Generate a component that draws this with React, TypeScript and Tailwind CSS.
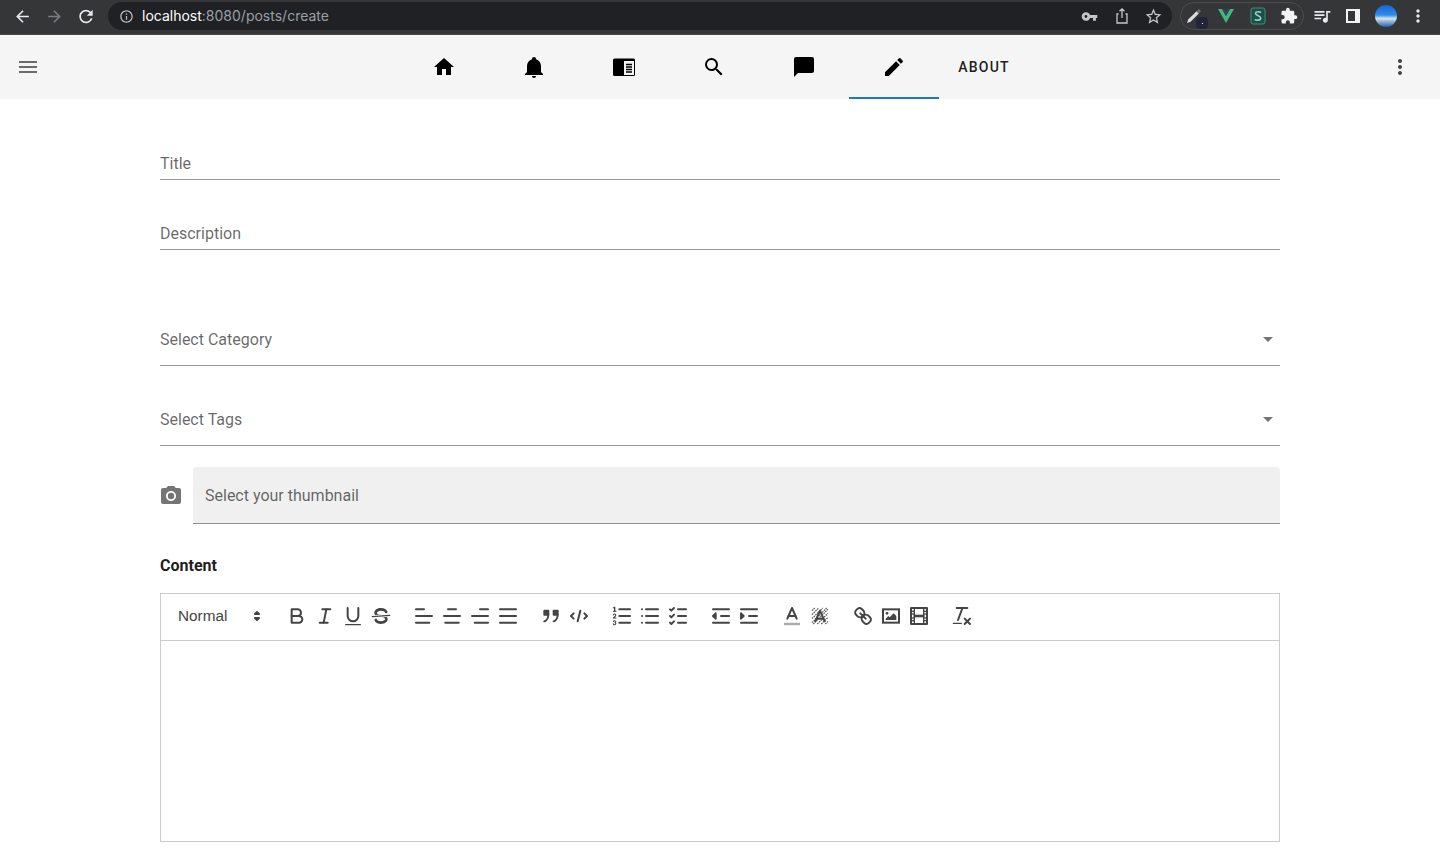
import type { ReactNode } from 'react';
import {
  MdArrowBack,
  MdArrowForward,
  MdRefresh,
  MdInfoOutline,
  MdVpnKey,
  MdStarBorder,
  MdExtension,
  MdQueueMusic,
  MdMoreVert,
  MdHome,
  MdSearch,
  MdChatBubble,
  MdEdit,
  MdPhotoCamera,
  MdArrowDropDown,
} from 'react-icons/md';

const roboto = { fontFamily: 'Roboto, sans-serif' };

function BellIcon() {
  return (
    <svg width="24" height="24" viewBox="0 0 24 24" fill="currentColor">
      <path d="M21,19V20H3V19L5,17V11C5,7.9 7.03,5.17 10,4.29C10,4.19 10,4.1 10,4A2,2 0 0,1 12,2A2,2 0 0,1 14,4C14,4.1 14,4.19 14,4.29C16.97,5.17 19,7.9 19,11V17L21,19M14,21A2,2 0 0,1 12,23A2,2 0 0,1 10,21" />
    </svg>
  );
}

function ReaderIcon() {
  return (
    <svg width="24" height="24" viewBox="0 0 24 24">
      <rect x="1" y="3.5" width="22" height="17.5" rx="1.5" fill="currentColor" />
      <rect x="12" y="6" width="10" height="14" fill="#f5f5f5" />
      <path d="M14 9.5h6M14 12h6M14 14.5h6M14 17h6" stroke="currentColor" strokeWidth="1.3" />
    </svg>
  );
}

const TABS = [
  { key: 'home', icon: <MdHome size={24} /> },
  { key: 'bell', icon: <BellIcon /> },
  { key: 'reader', icon: <ReaderIcon /> },
  { key: 'search', icon: <MdSearch size={24} /> },
  { key: 'chat', icon: <MdChatBubble size={24} /> },
  { key: 'edit', icon: <MdEdit size={24} />, active: true },
];

function BrowserBar() {
  return (
    <div className="flex h-[35px] items-center border-b border-[#4a4a4a] bg-[#353638] pb-0.5 text-[#f1f3f4]">
      <div className="flex w-[108px] items-center text-[#e8eaed]">
        <span className="ml-[12px] flex w-5 justify-center"><MdArrowBack size={19} /></span>
        <span className="ml-[12px] flex w-5 justify-center text-[#7b7d80]"><MdArrowForward size={19} /></span>
        <span className="ml-[12px] flex w-5 justify-center"><MdRefresh size={21} /></span>
      </div>
      <div className="flex h-[28px] w-[1064px] items-center rounded-full bg-[#202124]">
        <MdInfoOutline size={15} className="ml-[11px] text-[#bdc1c6]" />
        <span className="ml-[8px] text-sm leading-none" style={{ fontFamily: 'Inter, sans-serif' }}>
          <span className="text-white">localhost</span>
          <span className="text-[#9aa0a6]">:8080/posts/create</span>
        </span>
        <div className="ml-auto flex items-center pr-[9px] text-[#c4c7ca]">
          <MdVpnKey size={17} />
          <svg width="16" height="18" viewBox="0 0 16 18" fill="none" stroke="currentColor" strokeWidth="1.3" className="ml-[16px]">
            <path d="M4.5 7H3v9h10V7h-1.5M8 11V2M5.5 4.3 8 1.8l2.5 2.5" />
          </svg>
          <MdStarBorder size={19} className="ml-[14px]" />
        </div>
      </div>
      <div className="relative ml-[8px] flex h-[28px] w-[124px] items-center rounded-full border border-[#4c4d4f]">
        <svg width="16" height="16" viewBox="0 0 16 16" className="ml-[5px]">
          <path d="M1 15l1.2-3.6L10.5 3.2l2.3 2.3L4.6 13.8z" fill="#dadce0" />
          <path d="M10.5 3.2 12.7 1l2.3 2.3-2.2 2.2z" fill="#6b6d70" />
        </svg>
        <span className="absolute left-[15px] top-[14px] flex h-3 w-3 items-center justify-center rounded-sm bg-[#22253a]">
          <span className="h-px w-px bg-white" />
        </span>
        <svg width="18" height="16" viewBox="0 0 18 16" className="ml-[15px]">
          <path d="M1 1h4l4 7 4-7h4L9 15z" fill="#41b883" />
          <path d="M5 1h2.5L9 3.6 10.5 1H13L9 8z" fill="#35495e" />
        </svg>
        <svg width="16" height="18" viewBox="0 0 16 18" className="ml-[15px]">
          <rect x="1" y="1" width="14" height="16" rx="2" fill="#1f4d48" stroke="#3f8f80" strokeWidth="1" />
          <path d="M11 5.5C10 4.6 6 4.2 5.5 6.2S10.8 8.8 10.7 11.2 6 13.6 4.8 12.4" fill="none" stroke="#8fd3c4" strokeWidth="1.7" />
        </svg>
        <MdExtension size={18} className="ml-[14px] text-[#f1f3f4]" />
      </div>
      <MdQueueMusic size={20} className="ml-[8px] text-[#e8eaed]" />
      <svg width="16" height="16" viewBox="0 0 16 16" className="ml-[13px]">
        <rect x="1" y="1" width="14" height="14" fill="#f1f3f4" />
        <rect x="3" y="3" width="7" height="10" fill="#353638" />
      </svg>
      <div className="ml-[14px] h-[22px] w-[22px] rounded-full bg-[linear-gradient(180deg,#1266d8_0%,#2f8be8_45%,#d8e4ee_62%,#a8bdd0_72%,#1d63c0_100%)]" />
      <MdMoreVert size={20} className="ml-[11px] text-[#e8eaed]" />
    </div>
  );
}

function NavBar() {
  return (
    <nav className="flex h-[64px] items-center bg-[#f5f5f5] pl-1 pr-4" style={roboto}>
      <button className="flex h-12 w-12 items-center justify-center text-[#6a6a6a]">
        <svg width="24" height="24" viewBox="0 0 24 24" fill="currentColor">
          <path d="M3,6H21V8H3V6M3,11H21V13H3V11M3,16H21V18H3V16Z" />
        </svg>
      </button>
      <div className="flex h-full flex-1 justify-center">
        {TABS.map((tab) => (
          <div
            key={tab.key}
            className={
              tab.active
                ? 'flex w-[90px] items-center justify-center border-b-2 border-[#1976d2] pt-0.5 text-black'
                : 'flex w-[90px] items-center justify-center text-black'
            }
          >
            {tab.icon}
          </div>
        ))}
        <div className="flex w-[90px] items-center justify-center text-sm font-medium tracking-[1.25px] text-black/90">
          ABOUT
        </div>
      </div>
      <button className="flex h-12 w-12 items-center justify-center text-[#424242]">
        <MdMoreVert size={24} />
      </button>
    </nav>
  );
}

function Field({ label, className }: { label: string; className: string }) {
  return (
    <div className={`flex items-center border-b border-black/40 pt-0.5 text-base text-black/60 ${className}`}>
      {label}
    </div>
  );
}

function SelectField({ label, className }: { label: string; className: string }) {
  return (
    <div className={`flex h-[53px] items-center justify-between border-b border-black/40 text-base text-black/60 ${className}`}>
      <span className="pt-0.5">{label}</span>
      <MdArrowDropDown size={24} className="text-[#757575]" />
    </div>
  );
}

// quill snow icons, blown up to 24px in the reference
function Tb({ children }: { children: ReactNode }) {
  return (
    <span className="flex h-6 w-7 items-center justify-center">
      <svg
        width="24"
        height="24"
        viewBox="0 0 18 18"
        fill="none"
        stroke="#444"
        strokeWidth="1.5"
        strokeLinecap="round"
        strokeLinejoin="round"
      >
        {children}
      </svg>
    </span>
  );
}

function Group({ children }: { children: ReactNode }) {
  return <div className="mr-[15px] flex">{children}</div>;
}

function Toolbar() {
  return (
    <div className="flex h-[47px] items-center border-b border-[#ccc] pb-0.5 pl-[9px] pr-2">
      <div className="mr-[15px] flex h-6 w-[98px] items-center justify-between pl-2 pr-0.5 text-[15.3px] text-[#444]" style={{ fontFamily: '"Liberation Sans", Arial, sans-serif' }}>
        Normal
        <svg width="18" height="18" viewBox="0 0 18 18" fill="none" stroke="#444" strokeWidth="2" strokeLinejoin="round">
          <polygon points="7 11 9 13 11 11 7 11" />
          <polygon points="7 7 9 5 11 7 7 7" />
        </svg>
      </div>
      <Group>
        <Tb>
          <path d="M5,4H9.5A2.5,2.5,0,0,1,12,6.5v0A2.5,2.5,0,0,1,9.5,9H5A0,0,0,0,1,5,9V4A0,0,0,0,1,5,4Z" />
          <path d="M5,9h5.5A2.5,2.5,0,0,1,13,11.5v0A2.5,2.5,0,0,1,10.5,14H5a0,0,0,0,1,0,0V9A0,0,0,0,1,5,9Z" />
        </Tb>
        <Tb>
          <line x1="7" x2="13" y1="4" y2="4" />
          <line x1="5" x2="11" y1="14" y2="14" />
          <line x1="8" x2="10" y1="14" y2="4" />
        </Tb>
        <Tb>
          <path d="M5,3V9a4.012,4.012,0,0,0,4,4H9a4.012,4.012,0,0,0,4-4V3" />
          <rect height="1" rx="0.5" ry="0.5" width="12" x="3" y="15" fill="#444" stroke="none" />
        </Tb>
        <Tb>
          <line x1="15.5" x2="2.5" y1="8.5" y2="9.5" strokeWidth="1" />
          <path stroke="none" fill="#444" d="M9.007,8C6.542,7.791,6,7.519,6,6.5,6,5.792,7.283,5,9,5c1.571,0,2.765.679,2.969,1.309a1,1,0,0,0,1.9-.617C13.356,4.106,11.354,3,9,3,6.2,3,4,4.538,4,6.5a3.2,3.2,0,0,0,.5,1.843Z" />
          <path stroke="none" fill="#444" d="M8.984,10C11.457,10.208,12,10.479,12,11.5c0,.708-1.283,1.5-3,1.5-1.571,0-2.765-.679-2.969-1.309a1,1,0,1,0-1.9.617C4.644,13.894,6.646,15,9,15c2.8,0,5-1.538,5-3.5a3.2,3.2,0,0,0-.5-1.843Z" />
        </Tb>
      </Group>
      <Group>
        <Tb>
          <line x1="3" x2="15" y1="9" y2="9" />
          <line x1="3" x2="13" y1="14" y2="14" />
          <line x1="3" x2="9" y1="4" y2="4" />
        </Tb>
        <Tb>
          <line x1="15" x2="3" y1="9" y2="9" />
          <line x1="14" x2="4" y1="14" y2="14" />
          <line x1="12" x2="6" y1="4" y2="4" />
        </Tb>
        <Tb>
          <line x1="15" x2="3" y1="9" y2="9" />
          <line x1="15" x2="5" y1="14" y2="14" />
          <line x1="15" x2="9" y1="4" y2="4" />
        </Tb>
        <Tb>
          <line x1="15" x2="3" y1="9" y2="9" />
          <line x1="15" x2="3" y1="14" y2="14" />
          <line x1="15" x2="3" y1="4" y2="4" />
        </Tb>
      </Group>
      <Group>
        <Tb>
          <rect height="3" width="3" x="4" y="5" fill="#444" />
          <rect height="3" width="3" x="11" y="5" fill="#444" />
          <path d="M7,8c0,4.031-3,5-3,5" />
          <path d="M14,8c0,4.031-3,5-3,5" />
        </Tb>
        <Tb>
          <polyline points="5 7 3 9 5 11" />
          <polyline points="13 7 15 9 13 11" />
          <line x1="10" x2="8" y1="5" y2="13" />
        </Tb>
      </Group>
      <Group>
        <Tb>
          <line x1="7" x2="15" y1="4" y2="4" />
          <line x1="7" x2="15" y1="9" y2="9" />
          <line x1="7" x2="15" y1="14" y2="14" />
          <line x1="2.5" x2="4.5" y1="5.5" y2="5.5" strokeWidth="0.8" />
          <path stroke="none" fill="#444" d="M3.5,6A0.5,0.5,0,0,1,3,5.5V3.085l-0.276.138A0.5,0.5,0,0,1,2.053,3c-0.124-.247-0.023-0.324.224-0.447l1-.5A0.5,0.5,0,0,1,4,2.5v3A0.5,0.5,0,0,1,3.5,6Z" />
          <path strokeWidth="0.8" d="M4.5,10.5h-2c0-.234,1.85-1.076,1.85-2.234A0.959,0.959,0,0,0,2.5,8.156" />
          <path strokeWidth="0.8" d="M2.5,14.846a0.959,0.959,0,0,0,1.85-.109A0.7,0.7,0,0,0,3.75,14a0.688,0.688,0,0,0,.6-0.736,0.959,0.959,0,0,0-1.85-.109" />
        </Tb>
        <Tb>
          <line x1="6" x2="15" y1="4" y2="4" />
          <line x1="6" x2="15" y1="9" y2="9" />
          <line x1="6" x2="15" y1="14" y2="14" />
          <line x1="3" x2="3" y1="4" y2="4" />
          <line x1="3" x2="3" y1="9" y2="9" />
          <line x1="3" x2="3" y1="14" y2="14" />
        </Tb>
        <Tb>
          <line x1="9" x2="15" y1="4" y2="4" />
          <polyline points="3 4 4 5 6 3" />
          <line x1="9" x2="15" y1="14" y2="14" />
          <polyline points="3 14 4 15 6 13" />
          <line x1="9" x2="15" y1="9" y2="9" />
          <polyline points="3 9 4 10 6 8" />
        </Tb>
      </Group>
      <Group>
        <Tb>
          <line x1="3" x2="15" y1="14" y2="14" />
          <line x1="3" x2="15" y1="4" y2="4" />
          <line x1="9" x2="15" y1="9" y2="9" />
          <polyline points="5 7 5 11 3 9 5 7" fill="#444" />
        </Tb>
        <Tb>
          <line x1="3" x2="15" y1="14" y2="14" />
          <line x1="3" x2="15" y1="4" y2="4" />
          <line x1="9" x2="15" y1="9" y2="9" />
          <polyline points="3 7 3 11 5 9 3 7" fill="#444" />
        </Tb>
      </Group>
      <Group>
        <Tb>
          <line x1="3" x2="15" y1="15" y2="15" stroke="#aaa" strokeWidth="1.8" strokeLinecap="butt" />
          <polyline points="5.5 11 9 3 12.5 11" />
          <line x1="11.63" x2="6.38" y1="9" y2="9" />
        </Tb>
        <Tb>
          <g stroke="#555" strokeWidth="0.9" strokeDasharray="1.2 0.6" strokeLinecap="butt">
            <path d="M3 5 5 3M3 8 8 3M3 11 11 3M3 14 14 3M4 15 15 4M7 15 15 7M10 15 15 10M13 15 15 13" />
          </g>
          <polyline points="5.5 13 9 5 12.5 13" />
          <line x1="11.63" x2="6.38" y1="11" y2="11" />
        </Tb>
      </Group>
      <Group>
        <Tb>
          <line x1="7" x2="11" y1="7" y2="11" />
          <path d="M8.9,4.577a3.476,3.476,0,0,1,.36,4.679A3.476,3.476,0,0,1,4.577,8.9C3.185,7.5,2.035,6.4,4.217,4.217S7.5,3.185,8.9,4.577Z" />
          <path d="M13.423,9.1a3.476,3.476,0,0,0-4.679-.36,3.476,3.476,0,0,0,.36,4.679c1.392,1.392,2.5,2.542,4.679.36S14.815,10.5,13.423,9.1Z" />
        </Tb>
        <Tb>
          <rect height="10" width="12" x="3" y="4" strokeLinejoin="miter" />
          <circle cx="6" cy="7" r="1" fill="#444" stroke="none" />
          <polyline stroke="none" fill="#444" points="5 12 5 11 7 9 8 10 11 7 13 9 13 12 5 12" />
        </Tb>
        <Tb>
          <rect height="12" width="12" x="3" y="3" />
          <g stroke="none" fill="#444">
            <rect height="12" width="1" x="5" y="3" />
            <rect height="12" width="1" x="12" y="3" />
            <rect height="2" width="8" x="5" y="8" />
            <rect height="1" width="3" x="3" y="5" />
            <rect height="1" width="3" x="3" y="7" />
            <rect height="1" width="3" x="3" y="10" />
            <rect height="1" width="3" x="3" y="12" />
            <rect height="1" width="3" x="12" y="5" />
            <rect height="1" width="3" x="12" y="7" />
            <rect height="1" width="3" x="12" y="10" />
            <rect height="1" width="3" x="12" y="12" />
          </g>
        </Tb>
      </Group>
      <Group>
        <Tb>
          <line x1="5" x2="13" y1="3" y2="3" />
          <line x1="6" x2="9.35" y1="12" y2="3" />
          <line x1="11" x2="15" y1="11" y2="15" />
          <line x1="15" x2="11" y1="11" y2="15" />
          <rect height="1" rx="0.5" ry="0.5" width="7" x="2" y="14" fill="#444" stroke="none" />
        </Tb>
      </Group>
    </div>
  );
}

export default function App() {
  return (
    <div className="h-[856px] overflow-hidden bg-white" style={roboto}>
      <BrowserBar />
      <NavBar />
      <main className="flex flex-col px-40 pt-12">
        <Field label="Title" className="h-[33px]" />
        <Field label="Description" className="mt-[37px] h-[33px]" />
        <SelectField label="Select Category" className="mt-[63px]" />
        <SelectField label="Select Tags" className="mt-[27px]" />
        <div className="mt-[21px] flex h-[57px] items-center">
          <MdPhotoCamera size={24} className="-ml-px text-[#757575]" />
          <div className="ml-[10px] flex h-full flex-1 items-center rounded-t border-b border-black/40 bg-[#f0f0f0] px-3 pt-0.5 text-base text-black/60">
            Select your thumbnail
          </div>
        </div>
        <div className="mt-[30px] h-6 text-base font-bold leading-6 text-black/90">Content</div>
        <div className="mt-[15px] h-[249px] border border-[#ccc]">
          <Toolbar />
        </div>
      </main>
    </div>
  );
}
